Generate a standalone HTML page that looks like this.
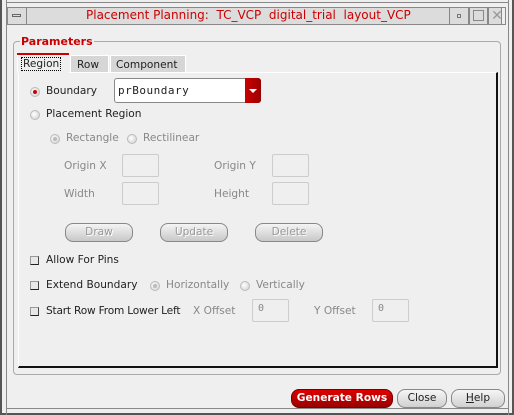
<!DOCTYPE html>
<html><head><style>
*{margin:0;padding:0;box-sizing:border-box}
body{width:514px;height:415px;background:#efefef;position:relative;overflow:hidden;font-family:"DejaVu Sans","Liberation Sans",sans-serif;font-size:10.6px;color:#222}
.a{position:absolute}
.t{position:absolute;white-space:nowrap}
.g{color:#888}
.rad{position:absolute;width:10px;height:10px;border-radius:50%;background:radial-gradient(circle at 40% 40%,#fff,#ccc);border:1px solid #bbb}
.rad.on::after{content:"";position:absolute;left:2px;top:2px;width:4px;height:4px;border-radius:50%;background:#c00}
.rad.dis.on::after{background:#bbb}
.cb{position:absolute;width:9px;height:9px;border:1px solid #999;border-right-color:#444;border-bottom-color:#222;background:#e8e8e8}
.in{position:absolute;border:1px solid #ccc;border-radius:2px;background:#efefef;font-family:"DejaVu Sans Mono",monospace;font-size:10px;color:#888;padding:3px 5px}
.btn{position:absolute;height:19px;border:1px solid #888;border-radius:8px;background:linear-gradient(#f4f4f4,#c8c8c8);text-align:center;line-height:17px;color:#999;text-shadow:1px 1px 0 #fff}
</style></head><body>
<div class="a" style="left:0;top:0;width:514px;height:415px;border:2px solid #555;border-top:none"></div>
<div class="a" style="left:6px;top:0;width:1px;height:415px;background:#888"></div>
<div class="a" style="left:508px;top:0;width:1px;height:415px;background:#888"></div>
<div class="a" style="left:6px;top:2px;width:503px;height:1px;background:#888"></div>
<div class="a" style="left:6px;top:408px;width:503px;height:1px;background:#888"></div>
<div class="a" style="left:7px;top:7px;width:495px;height:18px;background:#dcdcdc;border:1px solid #888"></div>
<div class="a" style="left:7px;top:7px;width:20px;height:18px;border:1px solid #888"></div>
<div class="a" style="left:12px;top:14px;width:9px;height:3px;border:1px solid #666"></div>
<div class="t" style="left:86px;top:8px;color:#c00;font-size:12px">Placement Planning:&nbsp; TC_VCP&nbsp; digital_trial&nbsp; layout_VCP</div>
<div class="a" style="left:449px;top:7px;width:20px;height:18px;border:1px solid #888"></div>
<div class="a" style="left:457px;top:14px;width:4px;height:4px;border:1px solid #777"></div>
<div class="a" style="left:469px;top:7px;width:19px;height:18px;border:1px solid #888"></div>
<div class="a" style="left:473px;top:10px;width:11px;height:11px;border:1px solid #888"></div>
<div class="a" style="left:488px;top:7px;width:18px;height:18px;border:1px solid #888;color:#999;font-size:14px;text-align:center;line-height:16px">✕</div>
<div class="a" style="left:13px;top:41px;width:488px;height:334px;border:1px solid #aaa;border-radius:4px"></div>
<div class="t" style="left:20px;top:35px;color:#c00;font-weight:bold;font-size:11px;background:#efefef;padding:0 1px">Parameters</div>
<div class="a" style="left:18px;top:72px;width:480px;height:296px;border-top:1px solid #fff;border-left:1px solid #fff;border-right:2px solid #111;border-bottom:2px solid #111"></div>
<div class="a" style="left:17px;top:53px;width:52px;height:2px;background:#c00"></div>
<div class="a" style="left:17px;top:55px;width:52px;height:18px;background:#efefef;border-left:1px solid #fff"></div>
<div class="t" style="left:21px;top:57px;border:1px dotted #000;padding:0 1px">Region</div>
<div class="a" style="left:70px;top:55px;width:39px;height:17px;background:#d6d6d6;border:1px solid #fff;border-bottom:none"></div>
<div class="t" style="left:77px;top:59px">Row</div>
<div class="a" style="left:110px;top:55px;width:76px;height:17px;background:#d6d6d6;border:1px solid #fff;border-bottom:none"></div>
<div class="t" style="left:116px;top:59px">Component</div>
<div class="rad on" style="left:30px;top:87px"></div>
<div class="t" style="left:46px;top:85px">Boundary</div>
<div class="a" style="left:114px;top:78px;width:147px;height:25px;background:#fff;border:1px solid #888;border-radius:3px"></div>
<div class="t" style="left:118px;top:84px;font-family:'DejaVu Sans Mono',monospace;font-size:11px;letter-spacing:0.5px">prBoundary</div>
<div class="a" style="left:245px;top:78px;width:16px;height:25px;background:linear-gradient(90deg,#c00,#900);border-radius:0 3px 3px 0"></div>
<div class="a" style="left:249px;top:89px;width:0;height:0;border-left:4px solid transparent;border-right:4px solid transparent;border-top:4px solid #fff"></div>
<div class="rad" style="left:30px;top:110px"></div>
<div class="t" style="left:46px;top:108px">Placement Region</div>
<div class="rad dis on" style="left:50px;top:134px"></div>
<div class="t g" style="left:66px;top:132px">Rectangle</div>
<div class="rad dis" style="left:127px;top:134px"></div>
<div class="t g" style="left:143px;top:132px">Rectilinear</div>
<div class="t g" style="left:64px;top:160px">Origin X</div>
<div class="in" style="left:122px;top:154px;width:37px;height:23px"></div>
<div class="t g" style="left:214px;top:160px">Origin Y</div>
<div class="in" style="left:272px;top:154px;width:37px;height:23px"></div>
<div class="t g" style="left:64px;top:188px">Width</div>
<div class="in" style="left:122px;top:182px;width:37px;height:23px"></div>
<div class="t g" style="left:214px;top:188px">Height</div>
<div class="in" style="left:272px;top:182px;width:37px;height:23px"></div>
<div class="btn" style="left:65px;top:223px;width:68px">Draw</div>
<div class="btn" style="left:160px;top:223px;width:68px">Update</div>
<div class="btn" style="left:255px;top:223px;width:68px">Delete</div>
<div class="cb" style="left:30px;top:256px"></div>
<div class="t" style="left:46px;top:254px">Allow For Pins</div>
<div class="cb" style="left:30px;top:281px"></div>
<div class="t" style="left:46px;top:279px">Extend Boundary</div>
<div class="rad dis on" style="left:150px;top:281px"></div>
<div class="t g" style="left:166px;top:279px">Horizontally</div>
<div class="rad dis" style="left:240px;top:281px"></div>
<div class="t g" style="left:256px;top:279px">Vertically</div>
<div class="cb" style="left:30px;top:307px"></div>
<div class="t" style="left:46px;top:305px;letter-spacing:-0.2px">Start Row From Lower Left</div>
<div class="t g" style="left:193px;top:305px">X Offset</div>
<div class="in" style="left:252px;top:299px;width:37px;height:23px">0</div>
<div class="t g" style="left:314px;top:305px">Y Offset</div>
<div class="in" style="left:372px;top:299px;width:37px;height:23px">0</div>
<div class="a" style="left:291px;top:389px;width:102px;height:19px;border-radius:8px;background:linear-gradient(#d00,#900);border:1px solid #700;color:#fff;font-weight:bold;text-align:center;line-height:17px">Generate Rows</div>
<div class="a" style="left:397px;top:389px;width:50px;height:19px;border-radius:8px;background:linear-gradient(#f6f6f6,#d0d0d0);border:1px solid #888;text-align:center;line-height:17px">Close</div>
<div class="a" style="left:451px;top:389px;width:54px;height:19px;border-radius:8px;background:linear-gradient(#f6f6f6,#d0d0d0);border:1px solid #888;text-align:center;line-height:17px"><u>H</u>elp</div>
</body></html>
